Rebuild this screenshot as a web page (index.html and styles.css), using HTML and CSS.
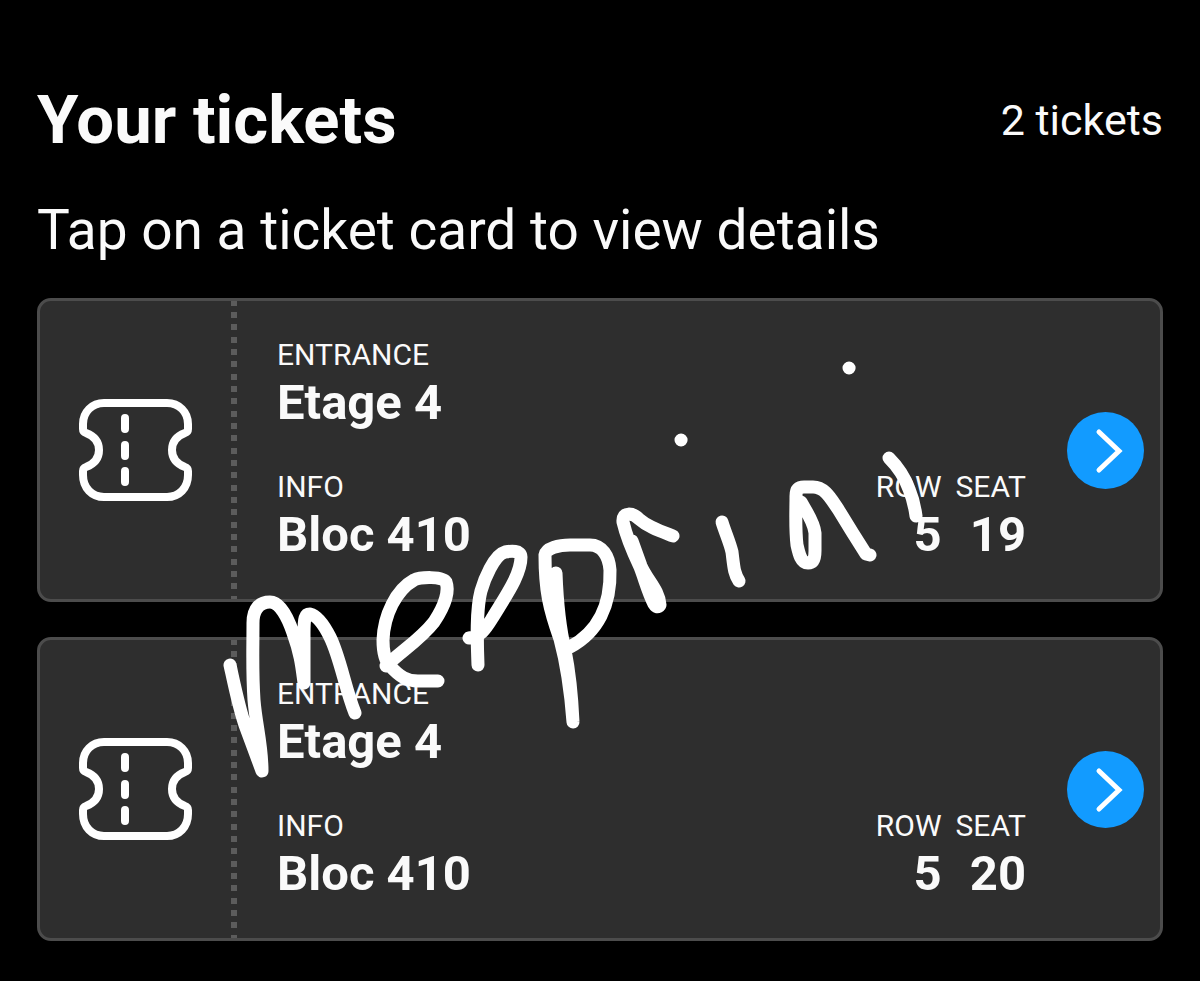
FILE: index.html
```html
<!DOCTYPE html>
<html lang="en">
<head>
    <meta charset="UTF-8">
    <meta name="viewport" content="width=device-width, initial-scale=1.0">
    <title>Your tickets</title>
    <link rel="stylesheet" href="styles.css">
</head>
<body>
    <main class="tickets">
        <header class="tickets-header">
            <h1>Your tickets</h1>
            <span class="count">2 tickets</span>
        </header>
        <p class="hint">Tap on a ticket card to view details</p>

        <div class="ticket-list">
            <a href="#ticket-1" class="ticket">
                <span class="stub">
                    <svg class="ticket-icon" viewBox="0 0 115 104" aria-hidden="true">
                        <path d="M26 5H89C101 5 110 14 110 26V31Q110 34 107 35C99 38 94 44 94 52S99 66 107 69Q110 70 110 73V77C110 90 101 99 89 99H26C14 99 5 90 5 77V73Q5 70 8 69C16 66 21 60 21 52S16 38 8 35Q5 34 5 31V26C5 14 14 5 26 5Z"/>
                        <path d="M47 20V31M47 47V58M47 73V84"/>
                    </svg>
                </span>
                <span class="perforation"></span>
                <span class="details">
                    <span class="field">
                        <span class="label">ENTRANCE</span>
                        <span class="value">Etage 4</span>
                    </span>
                    <span class="place">
                        <span class="field">
                            <span class="label">INFO</span>
                            <span class="value">Bloc 410</span>
                        </span>
                        <span class="field right">
                            <span class="label">ROW</span>
                            <span class="value">5</span>
                        </span>
                        <span class="field right">
                            <span class="label">SEAT</span>
                            <span class="value">19</span>
                        </span>
                    </span>
                </span>
                <svg class="arrow" viewBox="0 0 77 77" aria-hidden="true">
                    <circle cx="38.5" cy="38.5" r="38.5"/>
                    <path d="M32 20L52 39L32 58"/>
                </svg>
            </a>

            <a href="#ticket-2" class="ticket">
                <span class="stub">
                    <svg class="ticket-icon" viewBox="0 0 115 104" aria-hidden="true">
                        <path d="M26 5H89C101 5 110 14 110 26V31Q110 34 107 35C99 38 94 44 94 52S99 66 107 69Q110 70 110 73V77C110 90 101 99 89 99H26C14 99 5 90 5 77V73Q5 70 8 69C16 66 21 60 21 52S16 38 8 35Q5 34 5 31V26C5 14 14 5 26 5Z"/>
                        <path d="M47 20V31M47 47V58M47 73V84"/>
                    </svg>
                </span>
                <span class="perforation"></span>
                <span class="details">
                    <span class="field">
                        <span class="label">ENTRANCE</span>
                        <span class="value">Etage 4</span>
                    </span>
                    <span class="place">
                        <span class="field">
                            <span class="label">INFO</span>
                            <span class="value">Bloc 410</span>
                        </span>
                        <span class="field right">
                            <span class="label">ROW</span>
                            <span class="value">5</span>
                        </span>
                        <span class="field right">
                            <span class="label">SEAT</span>
                            <span class="value">20</span>
                        </span>
                    </span>
                </span>
                <svg class="arrow" viewBox="0 0 77 77" aria-hidden="true">
                    <circle cx="38.5" cy="38.5" r="38.5"/>
                    <path d="M32 20L52 39L32 58"/>
                </svg>
            </a>
        </div>
    </main>

    <!-- pen scribble over the cards -->
    <svg class="scribble" viewBox="0 0 1200 981" aria-hidden="true">
        <path d="M230 665C235 688 239 708 245 725L262 771C262 745 256 725 254 700C252 670 253 650 253 623C253 608 260 602 270 602C280 602 288 618 293 633C301 655 302 668 304 683V633C304 618 305 614 310 614C318 616 325 627 330 637C340 657 345 688 355 713"/>
        <path d="M386 666C400 652 420 640 434 622C446 604 449 590 446 582C443 576 420 577 414 580C396 590 384 615 383 640C383 652 385 661 390 666C400 677 407 681 418 681H438"/>
        <path d="M469 638C482 636 486 628 493 617C507 594 521 574 521 557C521 550 511 551 505 552C494 555 484 580 481 591C476 610 477 640 478 665"/>
        <path d="M556 573C557 600 559 625 565 650C570 675 572 700 573 722C571 695 567 665 560 639C549 608 545 590 545 555C546 548 559 545 570 545H590C602 545 609 556 610 570C611 605 598 632 570 647"/>
        <path d="M632 541L641 566C647 580 659 590 660 605Q657 609 654 604C648 592 645 580 640 567C632 550 626 535 623 522C622 511 633 513 639 519C648 527 660 531 673 536"/>
        <path d="M722 522C725 532 730 543 732 552C734 568 734 573 739 581"/>
        <path d="M801 502C806 511 814 522 815 533V551C815 559 813 563 808 563C801 563 799 554 797 545C795 528 796 511 796 496C796 490 798 487 804 487H813C825 487 831 499 838 509C847 524 857 540 866 554L870 555"/>
        <path d="M889 458C898 467 904 475 909 489C914 501 915 509 916 516"/>
        <path d="M681 440h.1M849 368h.1"/>
    </svg>
</body>
</html>
```
FILE: styles.css
```css
:root {
    --page-bg: #000000;
    --card-bg: #2e2e2e;
    --card-border: #4c4c4c;
    --perforation: #5c5c5c;
    --text-color: #fafafa;
    --accent: #129bff;
}

* {
    box-sizing: border-box;
}

body {
    position: relative;
    margin: 0;
    background-color: var(--page-bg);
    color: var(--text-color);
    font-family: Roboto, "Liberation Sans", sans-serif;
}

.tickets {
    padding: 80px 37px 40px;
}

.tickets-header {
    display: flex;
    justify-content: space-between;
    align-items: center;
}

h1 {
    margin: 0;
    font-size: 67px;
    line-height: 80px;
    font-weight: 700;
}

.count {
    font-size: 43px;
    line-height: 80px;
}

.hint {
    margin: 38px 0 36px;
    font-size: 55px;
    line-height: 64px;
}

.ticket-list {
    display: grid;
    gap: 35px;
}

.ticket {
    display: flex;
    align-items: center;
    padding-right: 16px;
    background-color: var(--card-bg);
    border: 3px solid var(--card-border);
    border-radius: 14px;
    color: inherit;
    text-decoration: none;
}

.stub {
    display: flex;
    justify-content: center;
    width: 191px;
}

.ticket-icon {
    width: 115px;
    height: 104px;
    fill: none;
    stroke: #ffffff;
    stroke-width: 8;
    stroke-linecap: round;
}

.perforation {
    align-self: stretch;
    width: 6px;
    background: repeating-linear-gradient(
        to bottom,
        var(--perforation) 0 5px,
        transparent 5px 11px,
        var(--perforation) 11px 17px,
        transparent 17px 23px,
        var(--perforation) 23px 29px,
        transparent 29px 36px,
        var(--perforation) 36px 37px
    );
}

.details {
    flex: 1;
    display: flex;
    flex-direction: column;
    gap: 36px;
    padding: 36px 41px 34px 40px;
}

.place {
    display: flex;
    gap: 14px;
}

.place .field:first-child {
    flex: 1;
}

.field {
    display: flex;
    flex-direction: column;
}

.right {
    text-align: right;
}

.label {
    font-size: 30px;
    line-height: 36px;
}

.value {
    font-size: 49px;
    line-height: 60px;
    font-weight: 700;
}

.arrow {
    width: 77px;
    height: 77px;
    fill: var(--accent);
}

.arrow path {
    fill: none;
    stroke: #ffffff;
    stroke-width: 5;
    stroke-linecap: round;
}

.scribble {
    position: absolute;
    top: 0;
    left: 0;
    width: 100%;
    fill: none;
    stroke: #ffffff;
    stroke-width: 13;
    stroke-linecap: round;
    stroke-linejoin: round;
    pointer-events: none;
}
```
